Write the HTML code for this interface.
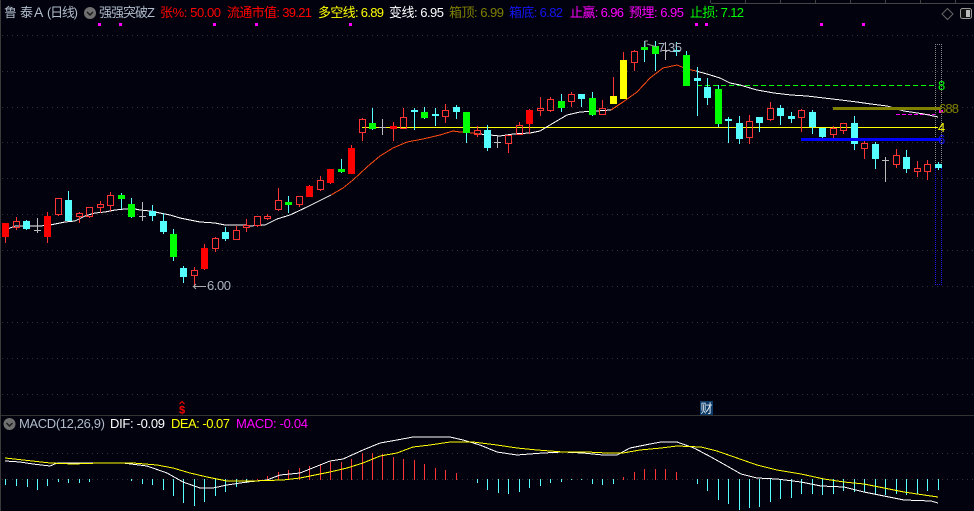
<!DOCTYPE html>
<html><head><meta charset="utf-8"><style>
html,body{margin:0;padding:0;background:#02020e;width:974px;height:511px;overflow:hidden}
svg{display:block;position:absolute;left:0;top:0}
text{font-family:"Liberation Sans","Noto Sans CJK SC",sans-serif;font-size:13px}
</style></head><body>
<svg width="974" height="511" viewBox="0 0 974 511" xmlns="http://www.w3.org/2000/svg">
<rect width="974" height="511" fill="#02020e"/>
<g shape-rendering="crispEdges" fill="none">
<path d="M0.5 0V511" stroke="#3a3a3a"/>
<path d="M711 3.5H974M710.5 0V3M745.5 0V3M780.5 0V3M815.5 0V3M850.5 0V3M885.5 0V3M920.5 0V3M955.5 0V3" stroke="#444"/>
<path d="M2 35.5H974M2 71.5H974M2 107.5H974M2 142.5H974M2 178.5H974M2 214.5H974M2 250.5H974M2 286.5H974M2 322.5H974M2 358.5H974M2 394.5H974M2 453.5H974M2 479.5H974" stroke="#333" stroke-dasharray="1 4"/>
<path d="M1 415.5H974" stroke="#333"/>
<path d="M935.5 44V164M941.5 44V164M935 44.5H942" stroke="#888" stroke-dasharray="1 1"/>
<path d="M935.5 164V285M941.5 164V285M935 284.5H942" stroke="#1a1ae0" stroke-dasharray="1 1"/>
<path d="M362 127.5H938" stroke="#ff0"/>
<path d="M697 85.5H935" stroke="#0f0" stroke-dasharray="5 3"/>
<path d="M896 114.5H935" stroke="#f0f" stroke-dasharray="4 2"/>
<polyline stroke="#fff" points="4,231 10,228 15,226 40,226 50,225 55,224 65,222 75,221 85,216 95,213 105,212 115,210 125,209 135,209 140,210 150,211 160,213 170,215 180,218 190,220 200,222 215,223 225,225 245,225 250,226 265,225 277,219 290,215 307,207 327,197 331,195"/>
<polyline stroke="#ff4a10" points="331,195 343,188 353,180 367,167 380,156 393,148 407,142 423,139 440,135 453,131 460,132 473,133 479,134"/>
<polyline stroke="#fff" points="479,134 490,135 500,136 513,134 530,133 540,131 550,125 567,115 580,112 611,110"/>
<polyline stroke="#ff4a10" points="611,110 623,102 637,92 650,78 663,68 677,65 687,69 696,71"/>
<polyline stroke="#fff" points="696,71 707,74 720,78 730,83 740,85 750,88 757,90 774,93 791,95 807,96 824,98 841,100 857,102 871,104 887,106 904,111 924,114 938,117"/>
<path stroke="#ff3535" d="M5.5 237V243M16.5 217V221M16.5 228V230M47.5 212V243M58.5 215V216M79.5 212V213M79.5 217V223M89.5 217V218M100.5 201V204M100.5 208V213M110.5 192V195M110.5 206V211M194.5 267V270M194.5 276V286M204.5 244V270M215.5 237V238M215.5 249V252M236.5 226V230M246.5 219V225M246.5 228V232M257.5 226V227M267.5 214V216M267.5 219V220M278.5 188V200M278.5 210V211M299.5 205V207M309.5 185V197M320.5 176V180M320.5 190V191M330.5 169V184M351.5 145V174M362.5 118V119M362.5 133V141M393.5 122V141M403.5 108V117M445.5 104V110M445.5 117V123M477.5 126V130M477.5 135V137M508.5 144V153M519.5 122V125M529.5 109V134M540.5 97V108M540.5 111V116M550.5 97V99M550.5 111V112M571.5 92V94M571.5 102V107M602.5 100V108M613.5 77V96M623.5 52V60M634.5 50V51M634.5 63V71M749.5 115V121M749.5 138V144M770.5 102V108M770.5 120V121M801.5 109V110M801.5 118V132M833.5 126V128M833.5 135V138M843.5 131V134M864.5 141V143M864.5 149V159M896.5 149V155M896.5 165V168M917.5 161V168M917.5 172V177M927.5 160V164M927.5 172V180"/>
<path stroke="#55ffff" d="M26.5 220V230M68.5 191V221M121.5 193V209M131.5 198V218M152.5 205V221M163.5 213V234M173.5 229V261M183.5 266V283M225.5 227V241M288.5 196V213M341.5 159V173M372.5 108V130M414.5 108V130M424.5 107V119M435.5 108V126M456.5 105V119M466.5 112V143M487.5 125V151M561.5 94V112M581.5 94V107M592.5 92V116M644.5 41V62M655.5 41V71M676.5 42V56M686.5 51V86M697.5 67V116M707.5 78V105M718.5 85V127M728.5 117V143M739.5 116V144M759.5 117V132M780.5 105V125M791.5 112V123M812.5 110V134M822.5 128V138M854.5 116V150M875.5 142V169M906.5 150V173M938.5 162V170"/>
<path stroke="#bbb" d="M37.5 218V233M34 230.5H41M142.5 202V221M139 216.5H146M382.5 119V135M379 127.5H386M497.5 136V148M494 142.5H501M665.5 42V60M662 50.5H669M885.5 157V182M882 160.5H889"/>
<path stroke="#ff3535" d="M13.5 221.5h6v6h-6zM55.5 198.5h6v16h-6zM76.5 213.5h6v3h-6zM86.5 207.5h6v9h-6zM97.5 204.5h6v3h-6zM107.5 195.5h6v10h-6zM191.5 270.5h6v5h-6zM212.5 238.5h6v10h-6zM233.5 230.5h6v9h-6zM243.5 225.5h6v2h-6zM254.5 216.5h6v9h-6zM264.5 216.5h6v2h-6zM275.5 200.5h6v9h-6zM296.5 196.5h6v8h-6zM317.5 180.5h6v9h-6zM359.5 119.5h6v13h-6zM400.5 117.5h6v11h-6zM442.5 110.5h6v6h-6zM474.5 130.5h6v4h-6zM505.5 135.5h6v8h-6zM516.5 125.5h6v9h-6zM537.5 108.5h6v2h-6zM547.5 99.5h6v11h-6zM568.5 94.5h6v7h-6zM599.5 108.5h6v6h-6zM631.5 51.5h6v11h-6zM746.5 121.5h6v16h-6zM767.5 108.5h6v11h-6zM798.5 110.5h6v7h-6zM830.5 128.5h6v6h-6zM840.5 123.5h6v7h-6zM861.5 143.5h6v5h-6zM893.5 155.5h6v9h-6zM914.5 168.5h6v3h-6zM924.5 164.5h6v7h-6z"/>
<path fill="#f00" d="M2 223h7v14h-7zM44 216h7v21h-7zM201 248h7v21h-7zM306 186h7v11h-7zM327 169h7v14h-7zM348 148h7v26h-7zM390 126h7v3h-7zM526 110h7v14h-7z"/>
<path fill="#55ffff" d="M23 221h7v8h-7zM65 200h7v21h-7zM149 211h7v5h-7zM160 221h7v11h-7zM180 268h7v9h-7zM222 232h7v7h-7zM411 110h7v2h-7zM432 114h7v2h-7zM453 107h7v5h-7zM484 130h7v18h-7zM578 94h7v5h-7zM673 50h7v2h-7zM694 78h7v3h-7zM704 87h7v11h-7zM725 119h7v2h-7zM736 123h7v16h-7zM756 117h7v6h-7zM777 108h7v8h-7zM788 116h7v3h-7zM809 112h7v15h-7zM819 128h7v9h-7zM851 123h7v21h-7zM872 144h7v15h-7zM903 157h7v12h-7zM935 164h7v4h-7z"/>
<path fill="#0f0" d="M118 195h7v4h-7zM128 204h7v13h-7zM170 234h7v23h-7zM285 202h7v3h-7zM338 169h7v3h-7zM369 123h7v6h-7zM421 112h7v6h-7zM463 112h7v21h-7zM558 101h7v7h-7zM589 98h7v17h-7zM641 47h7v3h-7zM652 46h7v8h-7zM683 55h7v31h-7zM715 89h7v35h-7z"/>
<path fill="#ff0" d="M610 96h7v8h-7zM620 60h7v39h-7z"/>
<path fill="#808000" d="M833 107h107v3H833z"/>
<path fill="#00f" d="M801 138h140v3H801z"/>
<path fill="#f0f" d="M98 23h3v3h-3zM119 23h3v3h-3zM213 23h3v3h-3zM255 23h3v3h-3zM349 23h3v3h-3zM695 23h3v3h-3zM705 23h3v3h-3zM820 23h3v3h-3zM862 23h3v3h-3zM939 110h4v3h-4z"/>
<path stroke="#ff3535" d="M257.5 479V480M267.5 476V480M278.5 472V480M288.5 470V480M299.5 468V480M309.5 466V480M320.5 464V480M330.5 462V480M341.5 462V480M351.5 459V480M362.5 453V480M372.5 453V480M382.5 454V480M393.5 457V480M403.5 459V480M414.5 460V480M424.5 464V480M435.5 468V480M445.5 470V480M456.5 473V480M623.5 477V480M634.5 472V480M644.5 469V480M655.5 469V480M665.5 469V480M676.5 472V480"/>
<path stroke="#55ffff" d="M5.5 479V485M16.5 479V486M27.5 479V487M37.5 479V490M47.5 479V486M58.5 479V482M68.5 479V483M79.5 479V483M89.5 479V482M131.5 479V481M142.5 479V484M152.5 479V485M163.5 479V490M173.5 479V496M183.5 479V503M194.5 479V506M204.5 479V502M215.5 479V496M225.5 479V492M236.5 479V487M246.5 479V483M477.5 479V483M487.5 479V490M498.5 479V493M508.5 479V494M519.5 479V492M529.5 479V488M540.5 479V486M550.5 479V483M561.5 479V482M571.5 479V480M581.5 479V480M592.5 479V484M602.5 479V485M613.5 479V484M697.5 479V484M707.5 479V491M718.5 479V500M728.5 479V504M739.5 479V510M749.5 479V508M759.5 479V507M770.5 479V502M780.5 479V499M791.5 479V498M801.5 479V494M812.5 479V494M822.5 479V495M833.5 479V494M843.5 479V491M854.5 479V492M864.5 479V492M875.5 479V495M885.5 479V495M896.5 479V494M906.5 479V495M917.5 479V494M927.5 479V491M938.5 479V490"/>
<polyline stroke="#fff" points="5,461 20,462 33,464 50,466 57,463 100,463 123,463 147,466 167,473 183,482 200,488 213,488 227,485 247,482 267,480 280,475 300,473 330,461 343,459 363,450 380,443 397,440 413,437 450,437 463,440 480,445 497,452 517,455 543,453 563,452 583,453 603,455 617,455 630,448 650,444 661,442 677,442 694,448 711,457 727,466 741,474 757,478 777,479 801,482 821,486 844,487 864,492 884,496 904,500 931,501 938,503"/>
<polyline stroke="#ff0" points="5,458 23,460 50,463 73,464 100,463 133,463 157,465 173,468 190,473 207,477 227,481 250,481 283,480 300,478 330,472 347,468 363,463 380,456 397,453 413,447 430,445 450,442 473,442 497,445 517,448 537,450 563,452 587,452 607,453 623,453 640,450 661,448 677,446 701,447 717,451 737,458 757,465 777,470 801,474 824,479 844,482 864,484 884,488 904,492 924,495 938,497"/>
</g>
<circle cx="90" cy="13" r="6" fill="#707070"/>
<path d="M87 12l3 3 3-3" fill="none" stroke="#1c1c1c" stroke-width="1.5"/>
<circle cx="9.5" cy="424" r="6" fill="#707070"/>
<path d="M6.5 423l3 3 3-3" fill="none" stroke="#1c1c1c" stroke-width="1.5"/>
<path d="M947.5 8.5l5.5 5.5-5.5 5.5-5.5-5.5z" fill="none" stroke="#666"/>
<rect x="960.5" y="8.500" width="11" height="10" rx="2" fill="#111" stroke="#999"/>
<rect x="966" y="10" width="4" height="7" fill="#bbb"/>
<text x="4" y="17" fill="#b0bccb">鲁</text>
<text x="20" y="17" fill="#b0bccb">泰</text>
<text x="34" y="17" fill="#b0bccb" style="font-size:14px">A</text>
<text x="47" y="17" fill="#b0bccb" textLength="31">(日线)</text>
<text x="99" y="17" fill="#b0bccb" textLength="56">强强突破Z</text>
<text x="160" y="17" fill="#f00" textLength="61">张%: 50.00</text>
<text x="227" y="17" fill="#f00" textLength="85">流通市值: 39.21</text>
<text x="318" y="17" fill="#ff0" textLength="66">多空线: 6.89</text>
<text x="389" y="17" fill="#fff" textLength="55">变线: 6.95</text>
<text x="449" y="17" fill="#808000" textLength="55">箱顶: 6.99</text>
<text x="509" y="17" fill="#1414f0" textLength="54">箱底: 6.82</text>
<text x="570" y="17" fill="#f0f" textLength="54">止赢: 6.96</text>
<text x="629" y="17" fill="#f0f" textLength="55">预埋: 6.95</text>
<text x="690" y="17" fill="#0f0" textLength="54">止损: 7.12</text>
<text x="19" y="428" fill="#b0bccb" textLength="86">MACD(12,26,9)</text>
<text x="110" y="428" fill="#fff" textLength="55">DIF: -0.09</text>
<text x="171" y="428" fill="#ff0" textLength="59">DEA: -0.07</text>
<text x="236" y="428" fill="#f0f" textLength="72">MACD: -0.04</text>
<path d="M194 286.5H206M196 284l-2.500 2.500 2.500 2.500" fill="none" stroke="#aaa"/>
<text x="207" y="290" fill="#a9b4c0" textLength="24">6.00</text>
<path d="M647 44l10 3M645 47V41h3" fill="none" stroke="#999"/>
<text x="658" y="52" fill="#a9b4c0" textLength="24">7.35</text>
<text x="938" y="90" fill="#0f0">8</text>
<text x="939" y="113" fill="#808000" textLength="20">688</text>
<text x="938" y="132" fill="#ff0">4</text>
<text x="938" y="144" fill="#1414f0">6</text>
<path d="M179.500 404l2.500-2.500 2.500 2.500" fill="none" stroke="#f00"/>
<text x="179" y="413.500" fill="#f00" style="font-size:11px;font-weight:bold">$</text>
<rect x="700" y="401" width="13" height="14" fill="#0c3a66"/>
<text x="700.5" y="412.500" fill="#e6eef5" style="font-size:12px">财</text>
</svg>
</body></html>
